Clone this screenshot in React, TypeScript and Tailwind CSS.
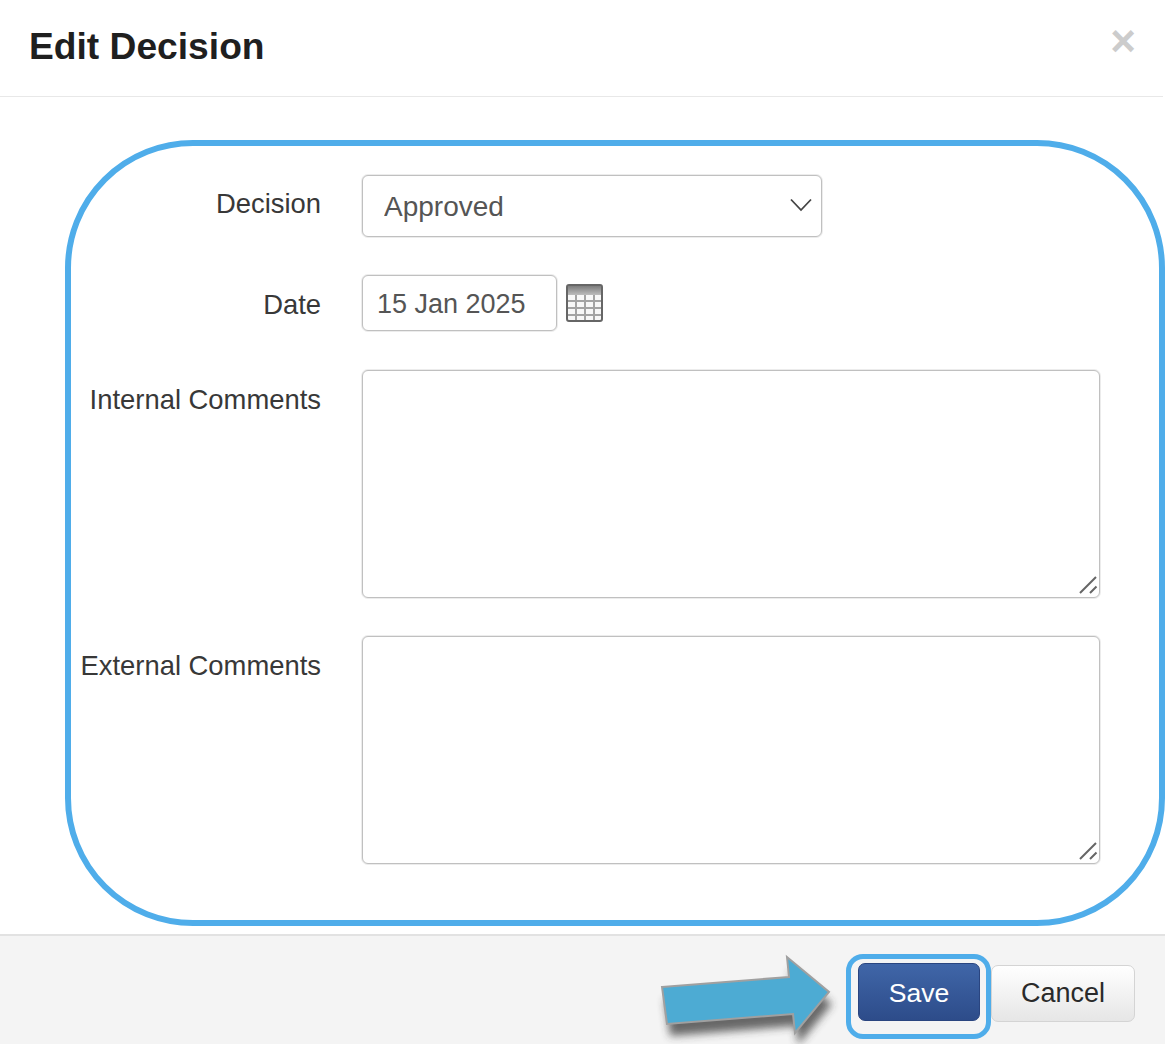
export default function App() {
  const font = "font-['Liberation_Sans',Arial,sans-serif]";
  const label = "w-[256px] ml-[-6px] text-right text-[27.4px] leading-[32px] text-[#383838]";
  const control = "border border-[#c0c0c0] shadow-[0_0_0_1px_#ececec] rounded-[6px] bg-white text-[27px] text-[#555555] outline-none " + font;
  const Handle = () => (
    <svg className="absolute right-[0px] bottom-[2px]" width="22" height="22" viewBox="0 0 22 22">
      <path d="M2 19L18 3M12 19L18.500 12.500" stroke="#666" strokeWidth="2" fill="none" />
    </svg>
  );
  return (
    <div className={"w-[1174px] h-[1044px] bg-white flex flex-col overflow-hidden " + font}>
      <header className="h-[97px] w-[1163px] shrink-0 border-b border-[#e8e8e8] flex items-center justify-between pl-[29px] pr-[27px]">
        <h1 className="text-[37.200px] font-bold text-[#1f1f1f] leading-none -mt-[3px]">Edit Decision</h1>
        <span className="text-[44px] font-bold leading-none text-[#cccccc] -mt-[14px]">×</span>
      </header>
      <main className="h-[837px] shrink-0 pt-[43px] pl-[65px]">
        <form className="w-[1100px] h-[786px] border-[6px] border-[#4fadea] rounded-[128px] pt-[29px] flex flex-col">
          <div className="flex items-start h-[62px]">
            <label className={label + " mt-[13px]"}>Decision</label>
            <div className="relative ml-[41px] w-[460px] h-[62px]">
              <select className={control + " w-full h-full pl-[21px] pt-[2px] appearance-none text-[28px]"} defaultValue="Approved">
                <option>Approved</option>
              </select>
              <svg className="absolute right-[9px] top-[22px]" width="24" height="16" viewBox="0 0 24 16">
                <path d="M2 2.500L12 13L22 2.500" stroke="#444" strokeWidth="1.800" fill="none" />
              </svg>
            </div>
          </div>
          <div className="flex items-start h-[56px] mt-[38px]">
            <label className={label + " mt-[14px]"}>Date</label>
            <input readOnly value="15 Jan 2025" className={control + " ml-[41px] w-[195px] h-[56px] pl-[14px] pt-[2px]"} />
            <svg className="ml-[9px] mt-[9px]" width="37" height="38" viewBox="0 0 37 38">
              <defs>
                <linearGradient id="calendarHead" x1="0" y1="0" x2="0" y2="1">
                  <stop offset="0" stopColor="#7d7d7d" />
                  <stop offset="1" stopColor="#bdbdbd" />
                </linearGradient>
              </defs>
              <rect x="1" y="1" width="35" height="36" rx="2" fill="#f8f8f8" stroke="#666666" strokeWidth="2" />
              <rect x="2" y="2" width="33" height="9" fill="url(#calendarHead)" />
              <path d="M2 17H35M2 24H35M2 31H35M10 11V36M19 11V36M28 11V36" stroke="#a4a4a4" strokeWidth="2" />
            </svg>
          </div>
          <div className="flex items-start h-[228px] mt-[39px]">
            <label className={label + " mt-[14px]"}>Internal Comments</label>
            <div className="relative ml-[41px] w-[738px] h-[228px]">
              <textarea className={control + " block w-full h-full resize-none"} />
              <Handle />
            </div>
          </div>
          <div className="flex items-start h-[228px] mt-[38px]">
            <label className={label + " mt-[14px]"}>External Comments</label>
            <div className="relative ml-[41px] w-[738px] h-[228px]">
              <textarea className={control + " block w-full h-full resize-none"} />
              <Handle />
            </div>
          </div>
        </form>
      </main>
      <footer className="flex-1 w-[1165px] bg-[#f4f4f4] border-t-2 border-[#e2e2e2] flex items-start justify-end pt-[18px] pr-[30px]">
        <svg className="overflow-visible mr-[14px] mt-[1px]" width="172" height="80" viewBox="660 955 172 80">
          <defs>
            <filter id="arrowShadow" x="-20%" y="-30%" width="140%" height="180%">
              <feGaussianBlur stdDeviation="4.500" />
            </filter>
          </defs>
          <polygon points="665,999 792,989 790,969 832,1004 798,1045 796,1026 670,1036" fill="#333333" opacity="0.72" filter="url(#arrowShadow)" />
          <polygon points="662,987 789,977 787,957 829,992 795,1033 793,1014 667,1024" fill="#4dabd3" stroke="#a0a0a0" strokeWidth="2" />
        </svg>
        <div className="border-[5px] border-[#4fadea] rounded-[17px] pt-[4px] pl-[7px] pr-[6px] pb-[13px]">
          <button type="button" className={"block w-[122px] h-[58px] pt-[3px] rounded-[7px] text-white text-[26.600px] bg-gradient-to-b from-[#4066a8] to-[#2d4c8a] border border-[#2a4580] " + font}>
            Save
          </button>
        </div>
        <button type="button" className={"block w-[144px] h-[57px] mt-[11px] rounded-[7px] text-[#2a2a2a] text-[27px] bg-gradient-to-b from-white to-[#e6e6e6] border border-[#d4d4d4] " + font}>
          Cancel
        </button>
      </footer>
    </div>
  );
}
